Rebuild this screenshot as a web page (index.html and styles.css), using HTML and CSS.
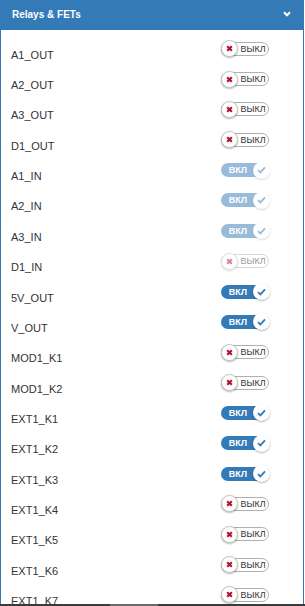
FILE: index.html
```html
<!DOCTYPE html>
<html>
<head>
<meta charset="utf-8">
<link rel="stylesheet" href="styles.css">
</head>
<body>
<div class="panel">
  <div class="panel-heading">
    <span class="title">Relays &amp; FETs</span>
    <svg class="chev" width="8" height="6" viewBox="0 0 8 6"><path d="M1 1.3 L4 4.3 L7 1.3" fill="none" stroke="#fff" stroke-width="2"/></svg>
  </div>
  <div class="panel-body">
    <div class="row"><span class="lbl">A1_OUT</span><span class="tgl off"><span class="knob"><svg width="7" height="7" viewBox="0 0 7 7"><path d="M1.2 1.2 L5.8 5.8 M5.8 1.2 L1.2 5.8" stroke="#b3132e" stroke-width="2.2"/></svg></span><span class="txt">ВЫКЛ</span></span></div>
    <div class="row"><span class="lbl">A2_OUT</span><span class="tgl off"><span class="knob"><svg width="7" height="7" viewBox="0 0 7 7"><path d="M1.2 1.2 L5.8 5.8 M5.8 1.2 L1.2 5.8" stroke="#b3132e" stroke-width="2.2"/></svg></span><span class="txt">ВЫКЛ</span></span></div>
    <div class="row"><span class="lbl">A3_OUT</span><span class="tgl off"><span class="knob"><svg width="7" height="7" viewBox="0 0 7 7"><path d="M1.2 1.2 L5.8 5.8 M5.8 1.2 L1.2 5.8" stroke="#b3132e" stroke-width="2.2"/></svg></span><span class="txt">ВЫКЛ</span></span></div>
    <div class="row"><span class="lbl">D1_OUT</span><span class="tgl off"><span class="knob"><svg width="7" height="7" viewBox="0 0 7 7"><path d="M1.2 1.2 L5.8 5.8 M5.8 1.2 L1.2 5.8" stroke="#b3132e" stroke-width="2.2"/></svg></span><span class="txt">ВЫКЛ</span></span></div>
    <div class="row"><span class="lbl">A1_IN</span><span class="tgl on dis"><span class="txt">ВКЛ</span><span class="knob"><svg width="9" height="8" viewBox="0 0 9 8"><path d="M1 4.2 L3.4 6.4 L8 1.4" fill="none" stroke="#337ab7" stroke-width="1.8"/></svg></span></span></div>
    <div class="row"><span class="lbl">A2_IN</span><span class="tgl on dis"><span class="txt">ВКЛ</span><span class="knob"><svg width="9" height="8" viewBox="0 0 9 8"><path d="M1 4.2 L3.4 6.4 L8 1.4" fill="none" stroke="#337ab7" stroke-width="1.8"/></svg></span></span></div>
    <div class="row"><span class="lbl">A3_IN</span><span class="tgl on dis"><span class="txt">ВКЛ</span><span class="knob"><svg width="9" height="8" viewBox="0 0 9 8"><path d="M1 4.2 L3.4 6.4 L8 1.4" fill="none" stroke="#337ab7" stroke-width="1.8"/></svg></span></span></div>
    <div class="row"><span class="lbl">D1_IN</span><span class="tgl off dis"><span class="knob"><svg width="7" height="7" viewBox="0 0 7 7"><path d="M1.2 1.2 L5.8 5.8 M5.8 1.2 L1.2 5.8" stroke="#b3132e" stroke-width="2.2"/></svg></span><span class="txt">ВЫКЛ</span></span></div>
    <div class="row"><span class="lbl">5V_OUT</span><span class="tgl on"><span class="txt">ВКЛ</span><span class="knob"><svg width="9" height="8" viewBox="0 0 9 8"><path d="M1 4.2 L3.4 6.4 L8 1.4" fill="none" stroke="#337ab7" stroke-width="1.8"/></svg></span></span></div>
    <div class="row"><span class="lbl">V_OUT</span><span class="tgl on"><span class="txt">ВКЛ</span><span class="knob"><svg width="9" height="8" viewBox="0 0 9 8"><path d="M1 4.2 L3.4 6.4 L8 1.4" fill="none" stroke="#337ab7" stroke-width="1.8"/></svg></span></span></div>
    <div class="row"><span class="lbl">MOD1_K1</span><span class="tgl off"><span class="knob"><svg width="7" height="7" viewBox="0 0 7 7"><path d="M1.2 1.2 L5.8 5.8 M5.8 1.2 L1.2 5.8" stroke="#b3132e" stroke-width="2.2"/></svg></span><span class="txt">ВЫКЛ</span></span></div>
    <div class="row"><span class="lbl">MOD1_K2</span><span class="tgl off"><span class="knob"><svg width="7" height="7" viewBox="0 0 7 7"><path d="M1.2 1.2 L5.8 5.8 M5.8 1.2 L1.2 5.8" stroke="#b3132e" stroke-width="2.2"/></svg></span><span class="txt">ВЫКЛ</span></span></div>
    <div class="row"><span class="lbl">EXT1_K1</span><span class="tgl on"><span class="txt">ВКЛ</span><span class="knob"><svg width="9" height="8" viewBox="0 0 9 8"><path d="M1 4.2 L3.4 6.4 L8 1.4" fill="none" stroke="#337ab7" stroke-width="1.8"/></svg></span></span></div>
    <div class="row"><span class="lbl">EXT1_K2</span><span class="tgl on"><span class="txt">ВКЛ</span><span class="knob"><svg width="9" height="8" viewBox="0 0 9 8"><path d="M1 4.2 L3.4 6.4 L8 1.4" fill="none" stroke="#337ab7" stroke-width="1.8"/></svg></span></span></div>
    <div class="row"><span class="lbl">EXT1_K3</span><span class="tgl on"><span class="txt">ВКЛ</span><span class="knob"><svg width="9" height="8" viewBox="0 0 9 8"><path d="M1 4.2 L3.4 6.4 L8 1.4" fill="none" stroke="#337ab7" stroke-width="1.8"/></svg></span></span></div>
    <div class="row"><span class="lbl">EXT1_K4</span><span class="tgl off"><span class="knob"><svg width="7" height="7" viewBox="0 0 7 7"><path d="M1.2 1.2 L5.8 5.8 M5.8 1.2 L1.2 5.8" stroke="#b3132e" stroke-width="2.2"/></svg></span><span class="txt">ВЫКЛ</span></span></div>
    <div class="row"><span class="lbl">EXT1_K5</span><span class="tgl off"><span class="knob"><svg width="7" height="7" viewBox="0 0 7 7"><path d="M1.2 1.2 L5.8 5.8 M5.8 1.2 L1.2 5.8" stroke="#b3132e" stroke-width="2.2"/></svg></span><span class="txt">ВЫКЛ</span></span></div>
    <div class="row"><span class="lbl">EXT1_K6</span><span class="tgl off"><span class="knob"><svg width="7" height="7" viewBox="0 0 7 7"><path d="M1.2 1.2 L5.8 5.8 M5.8 1.2 L1.2 5.8" stroke="#b3132e" stroke-width="2.2"/></svg></span><span class="txt">ВЫКЛ</span></span></div>
    <div class="row"><span class="lbl">EXT1_K7</span><span class="tgl off"><span class="knob"><svg width="7" height="7" viewBox="0 0 7 7"><path d="M1.2 1.2 L5.8 5.8 M5.8 1.2 L1.2 5.8" stroke="#b3132e" stroke-width="2.2"/></svg></span><span class="txt">ВЫКЛ</span></span></div>
  </div>
</div>
<div class="hscroll"><div class="thumb"></div></div>
</body>
</html>
```
FILE: styles.css
```css
html, body {
  margin: 0;
  padding: 0;
  height: 606px;
  overflow: hidden;
  background: #fff;
  font-family: "Liberation Sans", Arial, sans-serif;
  color: #333;
}
.panel {
  width: 302px;
  border: 1px solid #337ab7;
  border-top: none;
  height: 605px;
  overflow: hidden;
}
.panel-heading {
  background: #337ab7;
  height: 30px;
  display: flex;
  align-items: center;
  padding: 0 11px 0 12px;
  margin-left: -1px;
  margin-right: -1px;
}
.title {
  color: #fff;
  font-weight: bold;
  font-size: 10px;
  flex: 1;
  margin-top: -1px;
}
.chev {
  margin-top: -2px;
  margin-right: 2px;
}
.panel-body {
  padding-top: 9.6px;
}
.row {
  display: flex;
  align-items: center;
  height: 30.35px;
  padding-left: 10px;
}
.lbl {
  font-size: 11px;
  flex: 1;
}
.tgl {
  display: flex;
  align-items: center;
  width: 48px;
  height: 14px;
  border-radius: 8px;
  margin-right: 34px;
  margin-bottom: 12px;
  box-sizing: border-box;
  font-size: 9px;
}
.tgl.off {
  border: 1px solid #b0b0b0;
  background: #fff;
}
.tgl.on {
  background: #337ab7;
}
.tgl.dis {
  opacity: 0.5;
}
.knob {
  width: 17px;
  height: 17px;
  border-radius: 50%;
  background: #fff;
  box-shadow: 0 1px 2px rgba(0,0,0,0.3);
  display: flex;
  align-items: center;
  justify-content: center;
  flex: none;
  margin: -2px 0;
  box-sizing: border-box;
}
.off .knob {
  margin-left: -1px;
  border: 1px solid #c4c4c4;
}
.on .knob {
  margin-right: -1px;
}
.off .txt {
  flex: 1;
  text-align: center;
  color: #333;
  white-space: nowrap;
}
.on .txt {
  flex: 1;
  text-align: center;
  color: #fff;
  font-weight: bold;
  padding-left: 2px;
}
.hscroll {
  position: fixed;
  left: 0;
  right: 0;
  bottom: 0;
  height: 2px;
  background: #3b3b3b;
}
.thumb {
  margin-left: 110px;
  width: 48px;
  height: 2px;
  background: #6b6b6b;
}
```
